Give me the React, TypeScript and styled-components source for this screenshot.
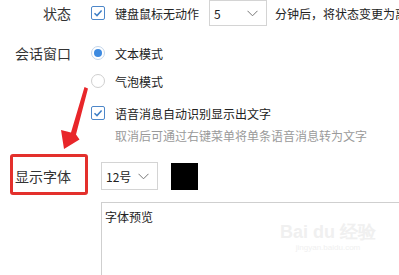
import React from 'react'
import styled, { createGlobalStyle } from 'styled-components'

const GlobalStyle = createGlobalStyle`
  html, body {
    margin: 0;
    padding: 0;
    background: #fff;
    overflow: hidden;
  }
  body {
    font-family: "Noto Sans CJK SC", "Noto Sans", sans-serif;
    color: #222;
  }
`

const Page = styled.div`
  position: relative;
  width: 399px;
  height: 275px;
  overflow: hidden;
`

const Row = styled.div<{ height?: number; top?: number }>`
  display: flex;
  align-items: center;
  height: ${({ height }) => height || 26}px;
  margin-top: ${({ top }) => top || 0}px;
`

const Label = styled.div`
  width: 71px;
  flex: none;
  text-align: right;
  font-size: 14px;
  color: #333;
  white-space: nowrap;
`

const Control = styled.div<{ offset?: number }>`
  display: flex;
  align-items: center;
  margin-left: ${({ offset }) => offset || 20}px;
  white-space: nowrap;
`

const Text = styled.span`
  font-size: 12px;
  color: #222;
  margin-left: 10px;
`

const Hint = styled.div`
  margin-left: 115px;
  font-size: 12px;
  line-height: 20px;
  color: #9a9a9a;
  white-space: nowrap;
`

const Box = styled.span`
  width: 12px;
  height: 12px;
  flex: none;
  border: 1px solid #4d87c9;
  border-radius: 2px;
  background: #fff;
  display: flex;
  align-items: center;
  justify-content: center;
`

const RadioRing = styled.span<{ checked?: boolean }>`
  width: 12px;
  height: 12px;
  flex: none;
  border: 1px solid ${({ checked }) => (checked ? '#c3d5ea' : '#cfcfcf')};
  border-radius: 50%;
  background: #fff;
  display: flex;
  align-items: center;
  justify-content: center;

  &::after {
    content: '';
    display: ${({ checked }) => (checked ? 'block' : 'none')};
    width: 8px;
    height: 8px;
    border-radius: 50%;
    background: #3d8ae0;
  }
`

const Select = styled.div<{ width: number; height: number }>`
  box-sizing: border-box;
  width: ${({ width }) => width}px;
  height: ${({ height }) => height}px;
  border: 1px solid #d4d4d4;
  background: #fff;
  display: flex;
  align-items: center;
  justify-content: space-between;
  padding: 0 8px 0 4px;
  font-size: 12px;
  color: #222;
`

const Swatch = styled.div`
  width: 27px;
  height: 27px;
  background: #000;
  margin-left: 13px;
`

const HighlightRow = styled(Row)`
  position: relative;
`

const Highlight = styled.div`
  position: absolute;
  left: 10px;
  top: -8px;
  width: 72px;
  height: 35px;
  border: 3px solid #e3302c;
  border-radius: 3px;
`

const Preview = styled.div`
  box-sizing: border-box;
  margin: 12px 0 0 101px;
  width: 320px;
  height: 90px;
  border-top: 1px solid #cfcfcf;
  border-left: 1px solid #cfcfcf;
  padding: 4px 0 0 3px;
  font-size: 12px;
  line-height: 20px;
  color: #222;
`

const Arrow = styled.svg`
  position: absolute;
  left: 0;
  top: 0;
  pointer-events: none;
`

const Watermark = styled.div`
  position: absolute;
  left: 280px;
  top: 222px;
  color: #f0f0f0;
  font-family: "Liberation Sans", sans-serif;
  text-align: center;
  white-space: nowrap;
`

const WmLogo = styled.div`
  font-size: 18px;
  font-weight: bold;
  line-height: 20px;
`

const WmUrl = styled.div`
  font-size: 8px;
  line-height: 12px;
`

const Check = () => (
  <svg width="10" height="10" viewBox="0 0 10 10">
    <path d="M1.5 5.2 L4 7.6 L8.6 2.4" fill="none" stroke="#3f7fc6" strokeWidth="1.5" />
  </svg>
)

const Chevron = () => (
  <svg width="11" height="7" viewBox="0 0 11 7">
    <path d="M0.5 0.8 L5.5 5.8 L10.5 0.8" fill="none" stroke="#777" strokeWidth="1" />
  </svg>
)

const App: React.FC = () => (
  <Page>
    <GlobalStyle />
    <Row height={26}>
      <Label>状态</Label>
      <Control>
        <Box>
          <Check />
        </Box>
        <Text>键盘鼠标无动作</Text>
        <Select width={58} height={26} style={{ marginLeft: 10 }}>
          <span>5</span>
          <Chevron />
        </Select>
        <Text style={{ marginLeft: 8 }}>分钟后，将状态变更为离开</Text>
      </Control>
    </Row>
    <Row top={14}>
      <Label>会话窗口</Label>
      <Control>
        <RadioRing checked />
        <Text>文本模式</Text>
      </Control>
    </Row>
    <Row top={2}>
      <Label />
      <Control>
        <RadioRing />
        <Text>气泡模式</Text>
      </Control>
    </Row>
    <Row top={6}>
      <Label />
      <Control>
        <Box>
          <Check />
        </Box>
        <Text>语音消息自动识别显示出文字</Text>
      </Control>
    </Row>
    <Hint>取消后可通过右键菜单将单条语音消息转为文字</Hint>
    <HighlightRow height={28} top={16}>
      <Highlight />
      <Label>显示字体</Label>
      <Control offset={30}>
        <Select width={57} height={28}>
          <span>12号</span>
          <Chevron />
        </Select>
        <Swatch />
      </Control>
    </HighlightRow>
    <Preview>字体预览</Preview>
    <Watermark>
      <WmLogo>Bai du 经验</WmLogo>
      <WmUrl>jingyan.baidu.com</WmUrl>
    </Watermark>
    <Arrow width="399" height="275">
      <path
        d="M84.5 87 L88 88.5 L76 134.5 L79.5 139.5 L64 149 L61 130 L71 132.5 Z"
        fill="#e8262a"
      />
    </Arrow>
  </Page>
)

export default App
